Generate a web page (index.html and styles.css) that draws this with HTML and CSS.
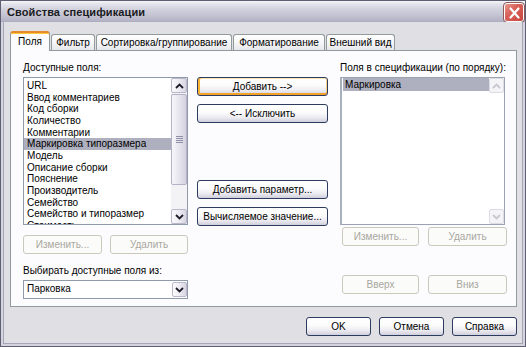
FILE: index.html
```html
<!DOCTYPE html>
<html lang="ru">
<head>
<meta charset="utf-8">
<title>Свойства спецификации</title>
<link rel="stylesheet" href="styles.css">
</head>
<body>
<div class="window">
  <div class="titlebar">
    <span class="title">Свойства спецификации</span>
    <span class="close"><svg width="13" height="12" viewBox="0 0 13 12"><path d="M2.5 1.5 L10.5 10.5 M10.5 1.5 L2.5 10.5" stroke="#fff" stroke-width="2.2" stroke-linecap="round"/></svg></span>
  </div>
  <div class="client">
    <div class="tabs">
      <div class="tab active t-fields">Поля</div>
      <div class="tab t-filter">Фильтр</div>
      <div class="tab t-sort">Сортировка/группирование</div>
      <div class="tab t-format">Форматирование</div>
      <div class="tab t-view">Внешний вид</div>
    </div>
    <div class="panel">
      <div class="col col-left">
        <div class="label">Доступные поля:</div>
        <div class="listbox">
          <div class="items">
            <div class="item">URL</div>
            <div class="item">Ввод комментариев</div>
            <div class="item">Код сборки</div>
            <div class="item">Количество</div>
            <div class="item">Комментарии</div>
            <div class="item selected">Маркировка типоразмера</div>
            <div class="item">Модель</div>
            <div class="item">Описание сборки</div>
            <div class="item">Пояснение</div>
            <div class="item">Производитель</div>
            <div class="item">Семейство</div>
            <div class="item">Семейство и типоразмер</div>
            <div class="item">Стоимость</div>
          </div>
          <div class="vscroll">
            <div class="sbtn"><svg width="9" height="6" viewBox="0 0 9 6"><path d="M1 5 L4.5 1.5 L8 5" stroke="#1e1e2a" stroke-width="1.8" fill="none"/></svg></div>
            <div class="thumb"><span class="grip"></span></div>
            <div class="track"></div>
            <div class="sbtn"><svg width="9" height="6" viewBox="0 0 9 6"><path d="M1 1 L4.5 4.5 L8 1" stroke="#1e1e2a" stroke-width="1.8" fill="none"/></svg></div>
          </div>
        </div>
        <div class="btnrow btnrow-left">
          <button class="btn disabled w-edit">Изменить...</button>
          <button class="btn disabled w-del">Удалить</button>
        </div>
        <div class="label label-source">Выбирать доступные поля из:</div>
        <div class="combo">
          <span class="combo-text">Парковка</span>
          <span class="sbtn combo-btn"><svg width="9" height="6" viewBox="0 0 9 6"><path d="M1 1 L4.5 4.5 L8 1" stroke="#1e1e2a" stroke-width="1.8" fill="none"/></svg></span>
        </div>
      </div>
      <div class="col col-mid">
        <button class="btn focused">Добавить --&gt;</button>
        <button class="btn">&lt;-- Исключить</button>
        <button class="btn btn-param">Добавить параметр...</button>
        <button class="btn">Вычисляемое значение...</button>
      </div>
      <div class="col col-right">
        <div class="label">Поля в спецификации (по порядку):</div>
        <div class="listbox listbox-right">
          <div class="items items-right">
            <div class="item item-right selected">Маркировка</div>
          </div>
          <div class="vscroll off">
            <div class="sbtn"><svg width="9" height="6" viewBox="0 0 9 6"><path d="M1 5 L4.5 1.5 L8 5" stroke="#c9c8d2" stroke-width="1.8" fill="none"/></svg></div>
            <div class="track"></div>
            <div class="sbtn"><svg width="9" height="6" viewBox="0 0 9 6"><path d="M1 1 L4.5 4.5 L8 1" stroke="#c9c8d2" stroke-width="1.8" fill="none"/></svg></div>
          </div>
        </div>
        <div class="btnrow btnrow-right">
          <button class="btn disabled w-edit2">Изменить...</button>
          <button class="btn disabled w-del2">Удалить</button>
        </div>
        <div class="btnrow btnrow-right btnrow-move">
          <button class="btn disabled w-edit2">Вверх</button>
          <button class="btn disabled w-del2">Вниз</button>
        </div>
      </div>
    </div>
    <div class="footer">
      <button class="btn btn-foot">OK</button>
      <button class="btn btn-foot">Отмена</button>
      <button class="btn btn-foot">Справка</button>
    </div>
  </div>
</div>
</body>
</html>
```

FILE: styles.css
```css
* { box-sizing: border-box; }
html, body { margin: 0; padding: 0; }
body {
  width: 526px;
  height: 347px;
  overflow: hidden;
  background: #e0dfe3;
  font-family: "Liberation Sans", Arial, sans-serif;
  font-size: 10px;
  color: #000;
}
.window {
  width: 526px;
  height: 347px;
  border: 1px solid #5f5f74;
  background: #d4d3de;
  display: flex;
  flex-direction: column;
}
.titlebar {
  height: 21px;
  flex: none;
  display: flex;
  align-items: center;
  justify-content: space-between;
  padding: 0 1px 0 6px;
  background: linear-gradient(#f6f6f9 0, #e4e4ec 3px, #d2d2de 8px, #c4c4d3 14px, #b3b3c6 20px, #a9a9bc 21px);
}
.title {
  font-weight: bold;
  font-size: 11px;
  color: #1a1a22;
  letter-spacing: 0.1px;
  margin-top: 1px;
}
.close {
  width: 20px;
  height: 19px;
  margin-top: 2px;
  border: 1px solid #fff;
  outline: 1px solid #8e5a5a;
  border-radius: 3px;
  background: linear-gradient(135deg, #e9988c 0%, #d8625a 40%, #c9473e 100%);
  display: flex;
  align-items: center;
  justify-content: center;
}
.client {
  flex: 1;
  margin: 0 2px 2px;
  border: 1px solid #a6a6b8;
  border-top: none;
  background: #e0dfe3;
  display: flex;
  flex-direction: column;
  padding: 9px 5px 7px 6px;
}
.tabs {
  height: 19px;
  flex: none;
  display: flex;
  align-items: flex-end;
  gap: 1px;
  position: relative;
  z-index: 1;
}
.tab {
  height: 16px;
  border: 1px solid #919b9c;
  border-bottom: none;
  border-radius: 3px 3px 0 0;
  background: linear-gradient(#ffffff, #f4f4f6 60%, #e6e6ec);
  text-align: center;
  line-height: 15px;
  white-space: nowrap;
  font-size: 10px;
}
.tab.active {
  height: 20px;
  margin-bottom: -1px;
  background: #fcfcfe;
  border-top: 2px solid #e68b2c;
  box-shadow: inset 0 1px 0 #ffc83c;
  line-height: 15px;
  padding-top: 1px;
}
.t-fields { width: 40px; }
.t-filter { width: 44px; }
.t-sort { width: 136px; }
.t-format { width: 92px; }
.t-view { width: 69px; }
.panel {
  height: 257px;
  flex: none;
  border: 1px solid #919b9c;
  background: #fcfcfe;
  display: flex;
  padding-left: 12px;
}
.col { display: flex; flex-direction: column; }
.col-left { width: 165px; }
.col-mid { width: 131px; margin-left: 9px; padding-top: 26px; gap: 8px; }
.col-right { width: 167px; margin-left: 12px; }
.label {
  margin-top: 10px;
  line-height: 13px;
  height: 13px;
  margin-bottom: 3px;
  white-space: nowrap;
}
.label-source { margin-top: 10px; margin-bottom: 3px; }
.listbox {
  height: 148px;
  border: 1px solid #8f9aab;
  background: #fff;
  display: flex;
}
.items {
  flex: 1;
  overflow: hidden;
  padding-top: 2px;
}
.item {
  height: 11.67px;
  line-height: 11.67px;
  padding-left: 3px;
  white-space: nowrap;
}
.item.selected { background: #afb0bf; }
.items-right { padding-top: 0; padding-left: 1px; }
.item-right { height: 13px; line-height: 13px; padding-left: 2px; }
.listbox-right { width: 165px; border-color: #9ba3b2; border-left: 2px solid #a9b0bd; }
.vscroll {
  width: 16px;
  flex: none;
  display: flex;
  flex-direction: column;
  background: #f3f3f6;
}
.vscroll.off { background: #fff; width: 15px; }
.sbtn {
  height: 15px;
  flex: none;
  border: 1px solid #b9b8cb;
  border-radius: 2px;
  background: linear-gradient(to right, #fbfbfd, #e9e8f0 60%, #d6d5e1);
  display: flex;
  align-items: center;
  justify-content: center;
}
.vscroll.off .sbtn { background: #f4f4f6; border-color: #dcdce4; }
.thumb {
  height: 91px;
  flex: none;
  margin-top: 1px;
  border: 1px solid #b3b2c6;
  border-radius: 2px;
  background: linear-gradient(to right, #f7f7fa, #e3e2ec 60%, #d3d2de);
  display: flex;
  align-items: center;
  justify-content: center;
}
.grip {
  width: 7px;
  height: 7px;
  background: repeating-linear-gradient(#8f8ea6 0, #8f8ea6 1px, transparent 1px, transparent 2px);
}
.track { flex: 1; }
.btnrow { display: flex; margin-top: 10px; }
.btnrow-left { gap: 8px; }
.btnrow-right { margin-top: 2px; padding-left: 2px; gap: 9px; }
.btnrow-move { margin-top: 29px; }
.btn {
  height: 19px;
  border: 1px solid #2d3b5e;
  border-radius: 3px;
  background: linear-gradient(#ffffff 0%, #fbfbfc 45%, #ebeaf0 75%, #cfcedc 100%);
  font-family: "Liberation Sans", Arial, sans-serif;
  font-size: 10px;
  color: #000;
  padding: 0;
  text-align: center;
  white-space: nowrap;
  line-height: 16px;
}
.btn.disabled {
  border-color: #cbc9be;
  background: #fbfbfa;
  color: #a8a79e;
}
.btn.focused {
  box-shadow: inset 2px 0 #f7b437, inset 0 -2px #f2a12a, inset 0 1px #fde6b0, inset -1px 0 #fbd385;
}
.btn-param { margin-top: 49px; }
.w-edit { width: 79px; }
.w-del { width: 78px; }
.w-edit2 { width: 77px; }
.w-del2 { width: 79px; }
.combo {
  height: 19px;
  border: 1px solid #8f9aab;
  background: #fff;
  display: flex;
  align-items: stretch;
}
.combo-text { flex: 1; padding-left: 3px; line-height: 16px; }
.combo-btn { width: 15px; height: auto; margin: 1px 0 1px 0; }
.footer {
  margin-top: 10px;
  display: flex;
  justify-content: flex-end;
  gap: 8px;
}
.btn-foot { width: 65px; }
```
